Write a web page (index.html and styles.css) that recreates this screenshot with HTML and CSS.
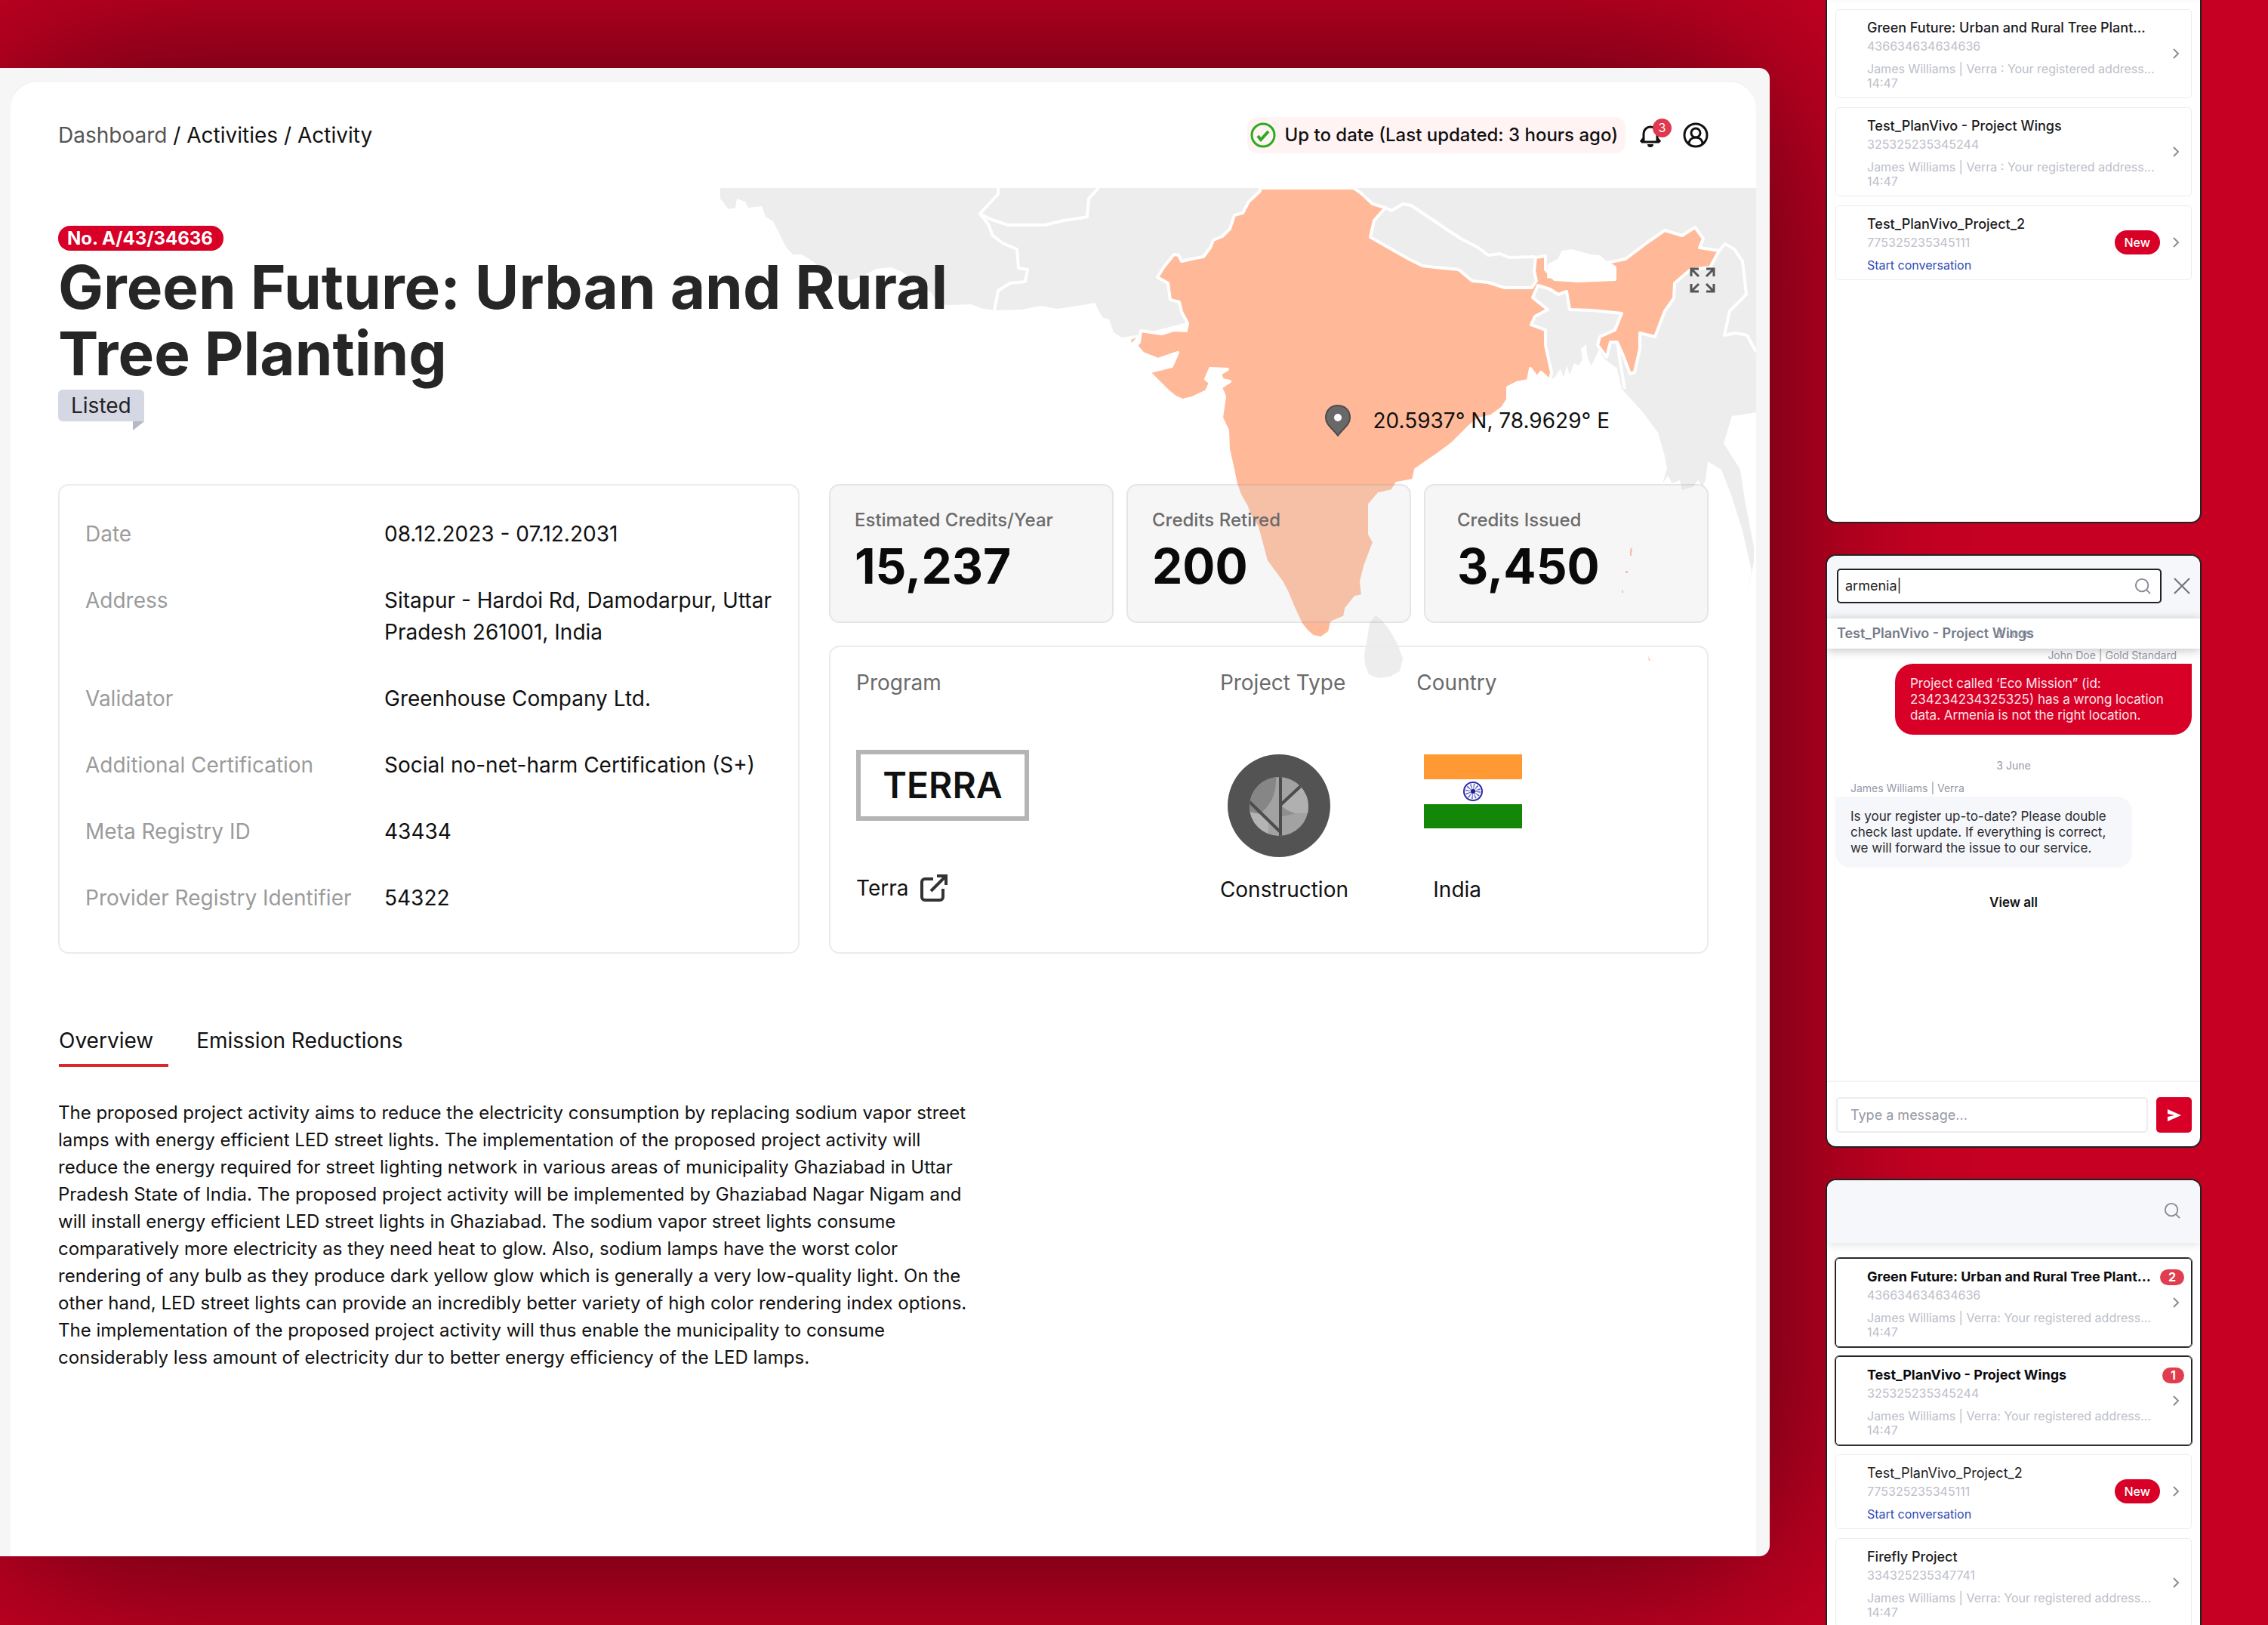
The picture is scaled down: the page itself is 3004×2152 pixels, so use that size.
FILE: index.html
```html
<!DOCTYPE html>
<html lang="en">
<head>
<meta charset="utf-8">
<title>Activity</title>
<link rel="stylesheet" href="styles.css">
</head>
<body>
<svg class="symbols" aria-hidden="true">
  <symbol id="i-search" viewBox="0 0 24 24"><circle cx="11" cy="11" r="9"/><path d="M17.5 17.5 23 23"/></symbol>
  <symbol id="i-chevron" viewBox="0 0 24 24"><path d="m9 6 6 6-6 6"/></symbol>
</svg>
<div class="page">
  <main class="window">
    <div class="panel">
      <header class="topbar">
        <nav class="crumbs" aria-label="Breadcrumb"><a class="crumb-root" href="#">Dashboard</a> / <a href="#">Activities</a> / <a href="#">Activity</a></nav>
        <div class="topbar-side">
          <div class="sync">
            <svg class="sync-icon" viewBox="0 0 34 34"><circle cx="17" cy="17" r="15"/><path class="sync-tick" d="m10 18 4 5 10-11"/></svg>
            <span>Up to date (Last updated: 3 hours ago)</span>
          </div>
          <div class="actions">
            <button class="icon-button bell" type="button" aria-label="Notifications">
              <svg viewBox="0 0 30 32"><path d="M3 25h24M6 25V14a9 9 0 0 1 18 0v11M2 25l4-5M28 25l-4-5"/><path class="solid" d="M11 28h8a4 4 0 0 1-8 0z"/></svg>
              <span class="bell-count">3</span>
            </button>
            <button class="icon-button" type="button" aria-label="Account">
              <svg class="user-icon" viewBox="0 0 34 34"><circle cx="17" cy="17" r="15"/><circle cx="17" cy="14" r="6"/><path d="M8 29c0-6 4-9 9-9s9 3 9 9"/></svg>
            </button>
          </div>
        </div>
      </header>

      <div class="content">
        <svg class="map" viewBox="955 249 1372 660" aria-hidden="true">
          <path class="land" d="M955 249V263L966 277 975 275 977 263 988 267 992 275 1010 273 1015 287 1025 293 1035 313 1042 327 1051 337 1063 337 1079 347 1088 356 1127 371 1144 366 1161 356 1181 354 1196 360 1210 371 1235 388 1243 402 1256 404 1288 403 1300 408 1318 411 1354 410 1380 405 1402 409 1441 403 1451 401 1461 420 1470 423 1476 440 1487 447 1512 443 1600 420 1700 249Z"/>
          <path class="land" d="M1780 249H2328V546L2295 551 2284 587 2306 622 2312 662 2324 725 2324 745 2315 787 2321 756 2309 703 2295 658 2281 622 2263 611 2260 636 2256 644 2250 636 2243 645 2229 649 2226 636 2216 640 2210 630 2203 640 2209 620 2206 604 2197 573 2177 546 2149 515 2143 488 2126 475 2119 463 2112 478 2108 484 2103 470 2102 456 2095 462 2097 476 2092 484 2086 481 2080 496 2076 484 2072 500 2068 488 2060 500 2054 504 2000 440 1790 300Z"/>
          <path class="border" d="M1323 249V257L1299 283 1312 290 1336 298 1385 298 1410 292 1425 290 1441 287 1443 263 1456 249M1299 283 1310 297 1316 312 1329 322 1348 330 1350 355 1362 357 1359 373 1339 375 1323 385 1318 411"/>
          <path class="border" d="M1836 275 1844 279 1859 270 1870 272 1879 278 1900 292 1919 305 1936 316 1959 328 1972 338 1988 336 2000 341 2034 340M2278 332 2286 323 2298 330 2309 346 2314 390 2292 412 2285 444 2300 441 2315 444 2327 466M2143 453 2147 480 2153 515M2140 437 2149 420"/>
          <path class="land" d="M1823 815 1832 822 1843 837 1852 853 1859 872 1855 889 1842 896 1827 898 1814 893 1809 880 1808 867 1812 845 1815 825Z"/>
          <path class="focus" d="M1670 249V253L1655 267 1647 282 1636 285 1630 303 1620 313 1608 318 1604 328 1595 340 1584 342 1566 346 1562 338 1556 337 1543 353 1534 367 1548 375 1551 397 1563 400 1566 413 1574 428 1572 438 1556 437 1540 442 1512 438 1510 453 1506 458 1515 468 1535 476 1561 467 1553 485 1525 492 1520 490 1548 518 1558 526 1568 530 1580 527 1599 518 1604 507 1598 502 1604 488 1627 489 1617 495 1620 503 1630 505 1618 513 1623 525 1619 553 1627 570 1628 595 1633 617 1638 641 1643 655 1652 671 1655 680 1666 698 1672 720 1678 743 1698 770 1706 785 1713 802 1724 826 1732 836 1740 843 1751 845 1762 837 1765 824 1782 817 1784 806 1796 791 1806 789 1804 770 1809 750 1821 718 1815 707 1815 668 1827 654 1845 650 1851 640 1873 636 1876 622 1902 604 1925 587 1948 564 1959 555 1976 551 1991 540 1998 529 1998 513 2010 507 2025 504 2028 488 2037 500 2042 493 2054 504 2056 493 2048 457 2048 437 2029 430 2034 419 2051 410 2031 394 2038 378 2054 383 2065 390 2076 386 2080 410 2110 411 2149 415 2140 437 2120 446 2117 457 2129 473 2134 453 2143 453 2151 471 2160 495 2166 493 2173 462 2173 441 2193 446 2206 412 2218 395 2219 375 2240 357 2266 354 2278 332 2252 328 2257 316 2246 301 2229 312 2206 305 2183 321 2154 343 2129 348 2140 354V370L2091 372 2060 370 2048 357V339L2035 341 2033 359 2036 372 2030 381 1994 381 1972 374 1951 372 1933 357 1902 354 1885 352 1867 343 1844 330 1816 314 1821 292 1836 275 1819 270 1804 256 1794 249Z"/>
          <path class="void" d="M2050 368 2051 350 2064 343 2070 332 2083 330 2108 337 2120 338 2129 346 2140 354V368L2110 370 2092 374Z"/>
          <path class="islands" d="M1499 450l7-3-6 7zM2160 728l3-4-1 12h-2zM2154 756h3v3h-3zM2149 782h2v3h-2zM2184 869l3 6h-2z"/>
        </svg>
        <button class="icon-button expand" type="button" aria-label="Full screen">
          <svg viewBox="0 0 34 34"><path d="M2 12V2h10M2 2l10 10M22 2h10v10M32 2 22 12M2 22v10h10M2 32l10-10M22 32h10V22M32 32 22 22"/></svg>
        </button>
        <div class="coords">
          <svg class="pin" viewBox="0 0 36 42"><path d="M18 1C8 1 2 8 2 17c0 10 9 14 16 24 7-10 16-14 16-24C34 8 28 1 18 1z"/><circle cx="18" cy="17" r="5"/></svg>
          <span>20.5937° N, 78.9629° E</span>
        </div>

        <section class="intro">
          <span class="number-tag">No. A/43/34636</span>
          <h1 class="title">Green Future: Urban and Rural Tree Planting</h1>
          <span class="state">Listed</span>
        </section>

        <section class="facts">
          <dl class="card details">
            <dt>Date</dt><dd>08.12.2023 - 07.12.2031</dd>
            <dt>Address</dt><dd>Sitapur - Hardoi Rd, Damodarpur, Uttar Pradesh 261001, India</dd>
            <dt>Validator</dt><dd>Greenhouse Company Ltd.</dd>
            <dt>Additional Certification</dt><dd>Social no-net-harm Certification (S+)</dd>
            <dt>Meta Registry ID</dt><dd>43434</dd>
            <dt>Provider Registry Identifier</dt><dd>54322</dd>
          </dl>
          <div class="summary">
            <div class="stats">
              <div class="card stat"><span class="stat-label">Estimated Credits/Year</span><strong class="stat-value">15,237</strong></div>
              <div class="card stat"><span class="stat-label">Credits Retired</span><strong class="stat-value">200</strong></div>
              <div class="card stat stat-wide"><span class="stat-label">Credits Issued</span><strong class="stat-value">3,450</strong></div>
            </div>
            <div class="card profile">
              <div class="trait">
                <span class="trait-label">Program</span>
                <div class="trait-art"><span class="terra-logo">TERRA</span></div>
                <a class="trait-name" href="#">Terra
                  <svg class="external" viewBox="0 0 38 38"><path d="M18 7H7a4 4 0 0 0-4 4v20a4 4 0 0 0 4 4h20a4 4 0 0 0 4-4V20M15 23 35 3M23 3h12v12"/></svg>
                </a>
              </div>
              <div class="trait">
                <span class="trait-label">Project Type</span>
                <div class="trait-art trait-art-inset">
                  <svg class="type-icon" viewBox="0 0 136 136">
                    <defs><clipPath id="disc"><circle cx="68" cy="69" r="39"/></clipPath></defs>
                    <circle cx="68" cy="68" r="68" fill="#535353"/>
                    <g clip-path="url(#disc)">
                      <path fill="#a2a2a2" d="M28 28h80v82H28z"/>
                      <path fill="#868686" d="M20 20h44v14c0 18-6 31-18 42L28 86z"/>
                      <path fill="#b4b4b4" d="M28 76l20 4c8 10 8 20 2 30H28z"/>
                      <path fill="#8e8e8e" d="M72 64l34 12c-14 0-24 5-34 6z"/>
                      <path fill="#b0b0b0" d="M72 68 98 42h12v36H90c-8-2-14-5-18-10z"/>
                      <path fill="none" stroke="#4c4c4c" stroke-width="4" d="M70 28v82M70 67l30-28M28 62l42 41"/>
                    </g>
                  </svg>
                </div>
                <span class="trait-name">Construction</span>
              </div>
              <div class="trait">
                <span class="trait-label">Country</span>
                <div class="trait-art trait-art-inset">
                  <svg class="flag" viewBox="0 0 130 98">
                    <path fill="#fff" d="M0 0h130v98H0z"/><path fill="#ff9933" d="M0 0h130v33H0z"/><path fill="#138808" d="M0 66h130v32H0z"/>
                    <g fill="none" stroke="#2a2aa8"><circle cx="65" cy="49" r="12" stroke-width="2"/><circle cx="65" cy="49" r="5" stroke-width="10" stroke-dasharray="1 1.6" opacity=".7"/></g><circle cx="65" cy="49" r="3" fill="#1c1c99"/>
                  </svg>
                </div>
                <span class="trait-name trait-name-inset">India</span>
              </div>
            </div>
          </div>
        </section>

        <nav class="tabs" aria-label="Sections">
          <a class="tab tab-active" href="#">Overview</a>
          <a class="tab" href="#">Emission Reductions</a>
        </nav>
        <p class="description">The proposed project activity aims to reduce the electricity consumption by replacing sodium vapor street lamps with energy efficient LED street lights. The implementation of the proposed project activity will reduce the energy required for street lighting network in various areas of municipality Ghaziabad in Uttar Pradesh State of India. The proposed project activity will be implemented by Ghaziabad Nagar Nigam and will install energy efficient LED street lights in Ghaziabad. The sodium vapor street lights consume comparatively more electricity as they need heat to glow. Also, sodium lamps have the worst color rendering of any bulb as they produce dark yellow glow which is generally a very low-quality light. On the other hand, LED street lights can provide an incredibly better variety of high color rendering index options. The implementation of the proposed project activity will thus enable the municipality to consume considerably less amount of electricity dur to better energy efficiency of the LED lamps.</p>
      </div>
    </div>
  </main>

  <aside class="chats">
    <section class="chat">
      <header class="chat-head"></header>
      <ul class="threads">
        <li class="thread">
          <div class="thread-text"><h3>Green Future: Urban and Rural Tree Plant...</h3><p class="thread-id">436634634634636</p><p class="thread-last">James Williams | Verra : Your registered address...<br>14:47</p></div>
          <svg class="chevron"><use href="#i-chevron"/></svg>
        </li>
        <li class="thread">
          <div class="thread-text"><h3>Test_PlanVivo - Project Wings</h3><p class="thread-id">325325235345244</p><p class="thread-last">James Williams | Verra : Your registered address...<br>14:47</p></div>
          <svg class="chevron"><use href="#i-chevron"/></svg>
        </li>
        <li class="thread">
          <div class="thread-text"><h3>Test_PlanVivo_Project_2</h3><p class="thread-id">775325235345111</p><a class="thread-last thread-start" href="#">Start conversation</a></div>
          <span class="new-tag">New</span>
          <svg class="chevron"><use href="#i-chevron"/></svg>
        </li>
      </ul>
    </section>

    <section class="chat">
      <header class="chat-head">
        <label class="search">
          <input class="search-input" type="text" value="armenia|" aria-label="Search">
          <svg class="search-icon"><use href="#i-search"/></svg>
        </label>
        <button class="icon-button close" type="button" aria-label="Close"><svg viewBox="0 0 22 22"><path d="m1 1 20 20M21 1 1 21"/></svg></button>
      </header>
      <div class="chat-title">Test_PlanVivo - Project Wings<span class="ghost-date">3 June</span></div>
      <div class="messages">
        <p class="author author-own">John Doe | Gold Standard</p>
        <p class="bubble bubble-own">Project called ‘Eco Mission” (id: 234234234325325) has a wrong location data. Armenia is not the right location.</p>
        <p class="day">3 June</p>
        <p class="author">James Williams | Verra</p>
        <p class="bubble">Is your register up-to-date? Please double check last update. If everything is correct, we will forward the issue to our service.</p>
        <button class="view-all" type="button">View all</button>
      </div>
      <form class="composer">
        <input class="composer-input" type="text" placeholder="Type a message..." aria-label="Message">
        <button class="send" type="button" aria-label="Send"><svg viewBox="0 0 20 18"><path d="M1 1l18 8L1 17v-6l9-2-9-2z"/></svg></button>
      </form>
    </section>

    <section class="chat">
      <header class="chat-head chat-head-end">
        <button class="icon-button" type="button" aria-label="Search"><svg class="search-icon"><use href="#i-search"/></svg></button>
      </header>
      <ul class="threads">
        <li class="thread thread-unread">
          <div class="thread-text"><h3>Green Future: Urban and Rural Tree Plant...</h3><p class="thread-id">436634634634636</p><p class="thread-last">James Williams | Verra: Your registered address...<br>14:47</p></div>
          <svg class="chevron"><use href="#i-chevron"/></svg>
          <span class="count">2</span>
        </li>
        <li class="thread thread-unread">
          <div class="thread-text"><h3>Test_PlanVivo - Project Wings</h3><p class="thread-id">325325235345244</p><p class="thread-last">James Williams | Verra: Your registered address...<br>14:47</p></div>
          <svg class="chevron"><use href="#i-chevron"/></svg>
          <span class="count">1</span>
        </li>
        <li class="thread thread-plain">
          <div class="thread-text"><h3>Test_PlanVivo_Project_2</h3><p class="thread-id">775325235345111</p><a class="thread-last thread-start" href="#">Start conversation</a></div>
          <span class="new-tag">New</span>
          <svg class="chevron"><use href="#i-chevron"/></svg>
        </li>
        <li class="thread">
          <div class="thread-text"><h3>Firefly Project</h3><p class="thread-id">334325235347741</p><p class="thread-last">James Williams | Verra: Your registered address...<br>14:47</p></div>
          <svg class="chevron"><use href="#i-chevron"/></svg>
        </li>
      </ul>
    </section>
  </aside>
</div>
</body>
</html>
```
FILE: styles.css
```css
*, *::before, *::after { box-sizing: border-box; }
body, h1, h3, p, dl, dd, ul { margin: 0; padding: 0; }
ul { list-style: none; }
a { color: inherit; text-decoration: none; }
button, input { font: inherit; color: inherit; }
svg { display: block; fill: none; }

body {
  background: #c60023;
  color: #111;
  font-family: Inter, "Liberation Sans", sans-serif;
  font-size: 28px;
  line-height: 42px;
}
.symbols { position: absolute; width: 0; height: 0; }
.page {
  display: flex;
  gap: 74px;
  height: 100vh;
  padding-right: 88px;
  overflow: hidden;
}
.icon-button { padding: 0; border: 0; background: none; cursor: pointer; }

/* Main window */
.window {
  display: flex;
  flex: 1;
  min-width: 0;
  margin: 90px 0 91px;
  padding: 17px 18px 0 14px;
  border-radius: 0 14px 14px 0;
  background: #f6f6f6;
  box-shadow: 0 0 900px rgba(0, 0, 0, .64);
}
.panel {
  flex: 1;
  min-width: 0;
  overflow: hidden;
  border-top: 1px solid #ececec;
  border-radius: 36px 36px 0 0;
  background: #fff;
}
.topbar {
  display: flex;
  align-items: center;
  justify-content: space-between;
  height: 141px;
  padding: 0 63px;
}
.crumb-root { color: #555; }
.topbar-side { display: flex; align-items: center; gap: 18px; }
.sync {
  display: flex;
  align-items: center;
  gap: 11px;
  height: 48px;
  padding: 0 10px 0 4px;
  border-radius: 14px;
  background: #fff3f3;
  font-size: 24px;
  font-weight: 500;
}
.sync-icon { width: 34px; height: 34px; stroke: #2bab1d; stroke-width: 3; }
.sync-tick { stroke-width: 4; }
.actions { display: flex; align-items: center; gap: 28px; }
.actions svg { stroke: #111; stroke-width: 3; }
.actions .solid { fill: #111; stroke: none; }
.bell { position: relative; }
.bell svg { width: 30px; height: 32px; }
.bell-count {
  position: absolute;
  top: -6px;
  right: -13px;
  width: 25px;
  height: 25px;
  border-radius: 50%;
  background: #e0384e;
  color: #fff;
  font-size: 16px;
  line-height: 25px;
}
.user-icon { width: 34px; height: 34px; }

.content { position: relative; padding: 50px 63px 0; }
.map { position: absolute; top: 0; right: 0; width: 1372px; height: 660px; }
.land { fill: #ededed; }
.border { stroke: #fff; stroke-width: 4; stroke-linejoin: round; }
.focus { fill: #ffb999; stroke: #fff; stroke-width: 4; stroke-linejoin: round; }
.void { fill: #fff; }
.islands { fill: #ffb999; }
.expand { position: absolute; top: 105px; right: 54px; }
.expand svg { width: 34px; height: 34px; stroke: #555; stroke-width: 3; }
.coords {
  position: absolute;
  top: 287px;
  right: 194px;
  display: flex;
  align-items: center;
  gap: 28px;
}
.pin { width: 36px; height: 42px; }
.pin path { fill: #696969; stroke: #4c4c4c; stroke-width: 2; }
.pin circle { fill: #fff; }

.intro {
  position: relative;
  display: flex;
  flex-direction: column;
  align-items: flex-start;
  gap: 4px;
}
.number-tag {
  padding: 0 14px 0 12px;
  border-radius: 16px;
  background: #d80027;
  color: #fff;
  font-size: 24px;
  font-weight: 700;
  line-height: 33px;
}
.title { max-width: 1240px; color: #262626; font-size: 80px; font-weight: 700; line-height: 88px; }
.state {
  position: relative;
  padding: 0 17px;
  border-radius: 6px 6px 0 6px;
  background: #d5d7e3;
  color: #222;
}
.state::after {
  content: "";
  position: absolute;
  top: 100%;
  right: 0;
  border-top: 12px solid #b4b8c9;
  border-right: 15px solid transparent;
}

.facts {
  position: relative;
  display: grid;
  grid-template-columns: 982fr 1165fr;
  gap: 39px;
  margin-top: 83px;
}
.card { border: 2px solid #ebebeb; border-radius: 14px; }
.details {
  display: grid;
  grid-template-columns: 396px 1fr;
  align-content: start;
  row-gap: 46px;
  padding: 43px 20px 51px 34px;
}
.details dt { color: #9b9b9b; }
.summary { display: flex; flex-direction: column; gap: 30px; }
.stats { display: grid; grid-template-columns: repeat(3, 1fr); gap: 17px; }
.stat {
  display: flex;
  flex-direction: column;
  gap: 2px;
  padding: 28px 32px 32px;
  border-color: rgba(0, 0, 0, .07);
  background: rgba(216, 216, 216, .23);
}
.stat-wide { padding-left: 42px; }
.stat-label { color: #6b6b6b; font-size: 24px; font-weight: 500; line-height: 36px; }
.stat-value { color: #0a0a0a; font-size: 64px; font-weight: 700; line-height: 82px; }
.profile {
  flex: 1;
  display: grid;
  grid-template-columns: 481fr 260fr 352fr;
  padding: 26px 32px 0 34px;
}
.trait { display: flex; flex-direction: column; align-items: flex-start; }
.trait-label { color: #6b6b6b; }
.trait-art { height: 136px; margin: 68px 0 26px; }
.trait-art-inset { height: 142px; padding-left: 10px; margin-top: 74px; margin-bottom: 16px; }
.terra-logo {
  display: block;
  width: 229px;
  border: 6px solid #b5b5b5;
  font-size: 48px;
  font-weight: 600;
  line-height: 82px;
  text-align: center;
}
.trait-name { display: flex; align-items: center; gap: 15px; }
.trait-name-inset { padding-left: 22px; }
.external { width: 38px; height: 38px; stroke: #333; stroke-width: 4; }
.type-icon { width: 136px; height: 136px; }
.flag { width: 130px; height: 98px; }

.tabs { display: flex; gap: 37px; margin: 94px 0 0 1px; }
.tab { padding: 0 0 10px; border-bottom: 4px solid transparent; }
.tab-active { padding-right: 20px; border-color: #d9272e; }
.description { max-width: 1220px; margin-top: 43px; font-size: 24px; line-height: 36px; }

/* Chat column */
.chats {
  position: relative;
  display: flex;
  flex-direction: column;
  gap: 41px;
  width: 498px;
  margin-top: -93px;
  font-size: 17px;
  line-height: 21px;
}
.chat {
  display: flex;
  flex: none;
  flex-direction: column;
  min-height: 786px;
  overflow: hidden;
  border: 2px solid #222;
  border-radius: 14px;
  background: #fff;
}
.chat-head {
  display: flex;
  align-items: center;
  gap: 16px;
  height: 83px;
  padding: 0 13px 4px;
  background: #f6f7fa;
  box-shadow: 0 2px 12px rgba(0, 0, 0, .12);
}
.chat-head-end { justify-content: flex-end; padding-right: 26px; }
.search-icon { width: 22px; height: 22px; stroke: #858991; stroke-width: 2; }
.search {
  display: flex;
  flex: 1;
  align-items: center;
  height: 46px;
  padding: 0 12px 0 9px;
  border: 2px solid #222;
  border-radius: 5px;
  background: #fff;
}
.search-input { flex: 1; min-width: 0; padding: 0; border: 0; outline: 0; background: none; color: #222; font-size: 18px; }
.close svg { width: 22px; height: 22px; stroke: #6d7078; stroke-width: 2; }
.chat-title {
  position: relative;
  padding: 0 13px;
  background: #fff;
  box-shadow: 0 2px 14px rgba(0, 0, 0, .25);
  color: #757b88;
  font-size: 18px;
  font-weight: 600;
  line-height: 40px;
}
.ghost-date {
  position: absolute;
  left: 0;
  right: 0;
  color: #9094b0;
  font-size: 14px;
  font-weight: 400;
  text-align: center;
}
.messages { display: flex; flex: 1; flex-direction: column; align-items: flex-start; padding: 0 11px; }
.author { padding: 0 20px; margin-bottom: 3px; color: #9599a8; font-size: 14px; line-height: 17px; }
.author-own { align-self: flex-end; }
.bubble {
  width: 393px;
  padding: 16px 20px 15px;
  border-radius: 0 20px 20px 20px;
  background: #f5f7fb;
  color: #2a2a2e;
}
.bubble-own {
  align-self: flex-end;
  border-radius: 24px 0 24px 24px;
  background: #d80027;
  color: #ffe3e7;
}
.day { align-self: center; margin: 30px 0 11px; color: #9599a8; font-size: 14px; }
.view-all { align-self: center; margin-top: 36px; padding: 0; border: 0; background: none; color: #111; font-weight: 600; cursor: pointer; }
.composer { display: flex; gap: 11px; padding: 20px 11px 18px 12px; border-top: 2px solid #f2f2f4; }
.composer-input { flex: 1; min-width: 0; height: 47px; padding: 0 17px; border: 2px solid #ececf1; border-radius: 5px; font-size: 18px; }
.composer-input::placeholder { color: #9599a4; opacity: 1; }
.send { display: grid; place-items: center; width: 47px; height: 47px; padding: 0; border: 0; border-radius: 5px; background: #d80027; cursor: pointer; }
.send svg { width: 20px; height: 18px; fill: #fff; }

.threads { display: flex; flex-direction: column; gap: 12px; padding: 20px 11px; }
.thread {
  position: relative;
  display: flex;
  align-items: center;
  padding: 12px 8px 9px 41px;
  border: 1px solid #ededf0;
  border-radius: 5px;
}
.thread-unread { border-color: #222; outline: 1px solid #333; }
.thread-text { flex: 1; min-width: 0; white-space: nowrap; }
.thread h3 { color: #1c1c1e; font-size: 18px; font-weight: 500; line-height: 24px; }
.thread-unread h3 { color: #0c0c0e; font-weight: 700; }
.thread-plain h3 { font-weight: 400; }
.thread-id { margin-top: 2px; color: #bcbec8; font-size: 16px; line-height: 20px; }
.thread-last { display: block; margin-top: 11px; color: #bcbec8; font-size: 16px; line-height: 19px; }
.thread-start { color: #2e4bb5; }
.chevron { flex: none; width: 24px; height: 24px; margin-bottom: 4px; stroke: #8c8c90; stroke-width: 2; }
.new-tag { margin: 0 9px 4px 0; padding: 0 13px; border-radius: 16px; background: #d80027; color: #fff; font-size: 16px; font-weight: 500; line-height: 32px; }
.count {
  position: absolute;
  top: 14px;
  right: 9px;
  padding: 0 11px;
  border-radius: 11px;
  background: #e03e4e;
  color: #fff;
  font-size: 16px;
  font-weight: 700;
  line-height: 21px;
}
```
